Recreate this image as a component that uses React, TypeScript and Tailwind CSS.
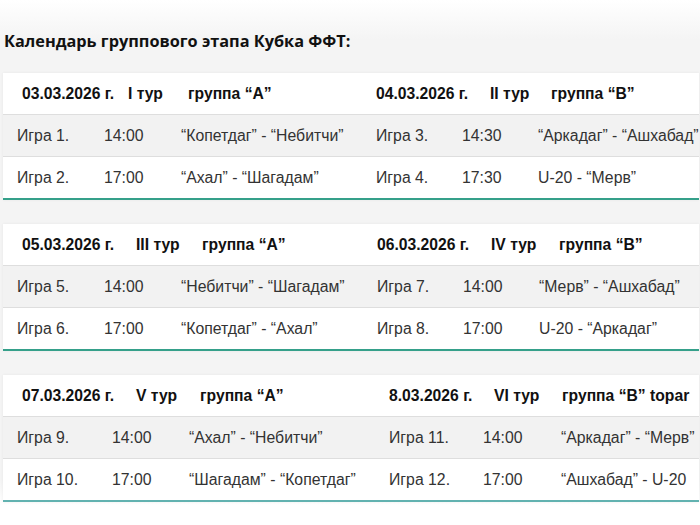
import React from "react";

type T = {
  hCols: string;
  bCols: string;
  head: string[];
  rows: string[][];
  border: string;
};

const tables: T[] = [
  {
    hCols: "grid-cols-[106px_60px_188px_114px_61px_1fr]",
    bCols: "grid-cols-[87px_77px_195px_86px_76px_1fr]",
    head: ["03.03.2026 г.", "I тур", "группа “А”", "04.03.2026 г.", "II тур", "группа “B”"],
    rows: [
      ["Игра 1.", "14:00", "“Копетдаг” - “Небитчи”", "Игра 3.", "14:30", "“Аркадаг” - “Ашхабад”"],
      ["Игра 2.", "17:00", "“Ахал” - “Шагадам”", "Игра 4.", "17:30", "U-20 - “Мерв”"],
    ],
    border: "border-[#35a08a]",
  },
  {
    hCols: "grid-cols-[114px_66px_175px_114px_68px_1fr]",
    bCols: "grid-cols-[87px_77px_196px_86px_76px_1fr]",
    head: ["05.03.2026 г.", "III тур", "группа “А”", "06.03.2026 г.", "IV тур", "группа “B”"],
    rows: [
      ["Игра 5.", "14:00", "“Небитчи” - “Шагадам”", "Игра 7.", "14:00", "“Мерв” - “Ашхабад”"],
      ["Игра 6.", "17:00", "“Копетдаг” - “Ахал”", "Игра 8.", "17:00", "U-20 - “Аркадаг”"],
    ],
    border: "border-[#35a08a]",
  },
  {
    hCols: "grid-cols-[114px_64px_189px_105px_68px_1fr]",
    bCols: "grid-cols-[95px_77px_200px_94px_78px_1fr]",
    head: ["07.03.2026 г.", "V тур", "группа “А”", "8.03.2026 г.", "VI тур", "группа “B” topar"],
    rows: [
      ["Игра 9.", "14:00", "“Ахал” - “Небитчи”", "Игра 11.", "14:00", "“Аркадаг” - “Мерв”"],
      ["Игра 10.", "17:00", "“Шагадам” - “Копетдаг”", "Игра 12.", "17:00", "“Ашхабад” - U-20"],
    ],
    border: "border-[#62b2b0]",
  },
];

function Table({ t }: { t: T }) {
  return (
    <div
      className={`ml-[3px] w-[696px] bg-white overflow-hidden border-b-2 ${t.border} shadow-[0_0_3px_rgba(0,0,0,0.06)]`}
    >
      <div
        className={`grid ${t.hCols} h-[42px] items-center pl-[19px] border-b border-[#dedede] font-bold text-[15.7px] text-[#111]`}
      >
        {t.head.map((c, i) => (
          <div key={i} className="whitespace-nowrap">
            {c}
          </div>
        ))}
      </div>
      {t.rows.map((r, ri) => (
        <div
          key={ri}
          className={`grid ${t.bCols} items-center pl-[14px] text-[15.8px] text-[#333] ${
            ri === 0 ? "h-[42px] bg-[#f2f2f2] border-b border-[#dedede]" : "h-[41px] bg-white"
          }`}
        >
          {r.map((c, i) => (
            <div key={i} className="whitespace-nowrap">
              {c}
            </div>
          ))}
        </div>
      ))}
    </div>
  );
}

export default function App() {
  return (
    <div
      className="w-[700px] h-[525px] overflow-hidden bg-[linear-gradient(to_bottom,#ffffff_0px,#f4f4f4_40px,#f4f4f4_480px,#ffffff_505px)]"
      style={{ fontFamily: '"Liberation Sans", Arial, sans-serif' }}
    >
      <div className="pt-[30px] pl-[4px] h-[73px]">
        <h1
          className="text-[16.3px] font-bold text-[#111] leading-[22px]"
          style={{ fontFamily: '"Open Sans", "Noto Sans", sans-serif' }}
        >
          Календарь группового этапа Кубка ФФТ:
        </h1>
      </div>
      <div className="flex flex-col gap-[24px]">
        {tables.map((t, i) => (
          <Table key={i} t={t} />
        ))}
      </div>
    </div>
  );
}
